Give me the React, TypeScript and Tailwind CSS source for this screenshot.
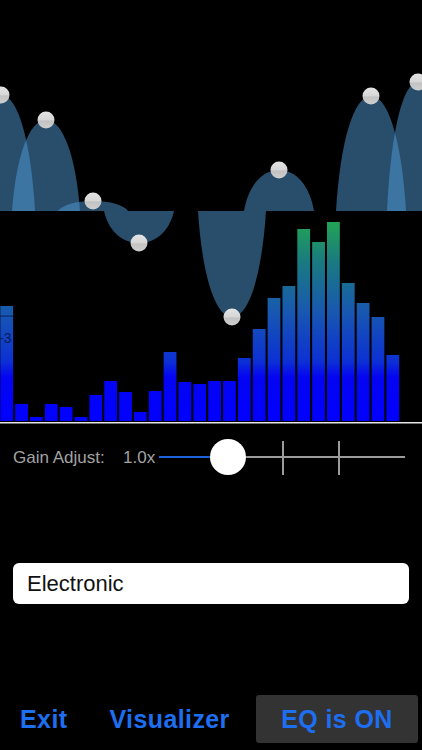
const bars = [306, 404, 417, 404, 407, 417, 395, 381, 392, 412, 391, 352, 382, 384, 381, 381, 358, 329, 298, 286, 229, 242, 222, 283, 303, 317, 355];

// xc, peak y, half width
const bands: [number, number, number][] = [
  [1, 95, 34],
  [46, 120, 34],
  [93, 201, 35],
  [139, 243, 35],
  [232, 317, 34],
  [279, 170, 35],
  [371, 96, 35],
  [418, 82, 31],
];

const BASE = 211;

function arch(xc: number, peak: number, hw: number) {
  const x0 = xc - hw;
  const x1 = xc + hw;
  const h = peak - BASE;
  return `M${x0} ${BASE} C${x0 + 0.12 * hw} ${BASE + 0.6 * h} ${xc - 0.5 * hw} ${peak} ${xc} ${peak} C${xc + 0.5 * hw} ${peak} ${x1 - 0.12 * hw} ${BASE + 0.6 * h} ${x1} ${BASE} Z`;
}

const EqChart = () => (
  <svg width="422" height="424" viewBox="0 0 422 424" className="block">
    <defs>
      <linearGradient id="barFill" gradientUnits="userSpaceOnUse" x1="0" y1="222" x2="0" y2="421">
        <stop offset="0" stopColor="#22a455" />
        <stop offset="0.2" stopColor="#1a7a80" />
        <stop offset="0.45" stopColor="#1858b0" />
        <stop offset="0.7" stopColor="#0c30d4" />
        <stop offset="0.78" stopColor="#0404f2" />
        <stop offset="1" stopColor="#0000ff" />
      </linearGradient>
      <linearGradient id="knob" x1="0" y1="0" x2="0" y2="1">
        <stop offset="0" stopColor="#e4e4e4" />
        <stop offset="0.5" stopColor="#d6d6d6" />
        <stop offset="0.55" stopColor="#c2c2c2" />
        <stop offset="1" stopColor="#cfcfcf" />
      </linearGradient>
    </defs>
    {bars.map((top, i) => (
      <rect key={i} x={0.3 + i * 14.85} y={top} width={12.8} height={421 - top} fill="url(#barFill)" />
    ))}
    <rect x="0" y="315.5" width="13" height="1.2" fill="#0a1850" opacity="0.7" />
    <text x="-1" y="343" fontSize="14" fill="#0a1a5a" fontFamily="Liberation Sans, sans-serif">-3</text>
    {bands.map(([xc, p, hw], i) => (
      <path key={i} d={arch(xc, p, hw)} fill="rgba(80,155,215,0.5)" />
    ))}
    {bands.map(([xc, p], i) => (
      <circle key={i} cx={xc} cy={p} r="8.5" fill="url(#knob)" />
    ))}
    <rect x="0" y="422" width="422" height="1.5" fill="#e6e6e6" />
  </svg>
);

const GainSlider = () => (
  <div className="flex h-[66px] items-center pl-[13px] text-[17px] text-[#a3a3a3]" style={{ fontFamily: "Liberation Sans, Arial, sans-serif" }}>
    <span className="w-[110px] pt-[2px]">Gain Adjust:</span>
    <span className="w-[36px] pt-[2px]">1.0x</span>
    <div className="relative h-[36px] w-[246px]">
      <div className="absolute left-0 right-0 top-[17px] h-[2px] bg-[#9c9c9c]" />
      <div className="absolute left-0 top-[17px] h-[2px] w-[69px] bg-[#1d63dd]" />
      <div className="absolute left-[123px] top-[2px] h-[34px] w-[2px] bg-[#9c9c9c]" />
      <div className="absolute left-[179px] top-[2px] h-[34px] w-[2px] bg-[#9c9c9c]" />
      <div className="absolute left-[51px] top-0 h-[36px] w-[36px] rounded-full bg-white shadow-[0_1px_3px_rgba(0,0,0,0.4)]" />
    </div>
  </div>
);

export default function App() {
  return (
    <div className="flex h-[750px] w-[422px] flex-col overflow-hidden bg-black" style={{ fontFamily: "Liberation Sans, Arial, sans-serif" }}>
      <EqChart />
      <GainSlider />
      <div className="mx-[13px] mt-[73px] flex h-[41px] items-center rounded-[6px] bg-white px-[14px]">
        <span className="text-[22px] text-[#111]">Electronic</span>
      </div>
      <div className="mt-auto flex items-center pb-[7px] text-[25px] font-bold tracking-[0.4px] text-[#1e6ef0]">
        <button className="ml-[20px] pt-[2px]">Exit</button>
        <button className="ml-[42px] pt-[2px]">Visualizer</button>
        <button className="ml-auto mr-[4px] flex h-[48px] w-[162px] items-center justify-center rounded-[3px] bg-[#333333] pt-[2px] text-[#1e6ef0]">
          EQ is ON
        </button>
      </div>
    </div>
  );
}
